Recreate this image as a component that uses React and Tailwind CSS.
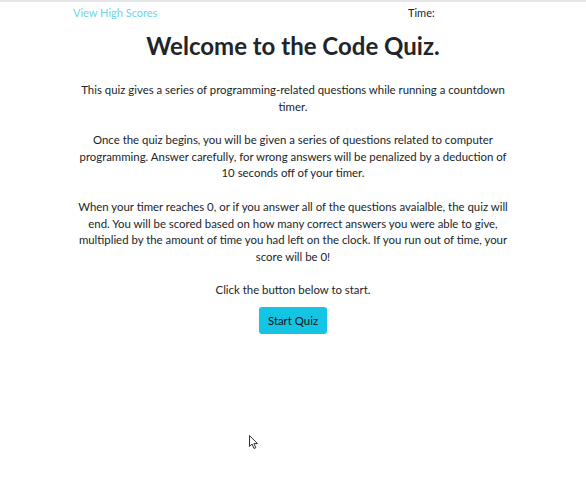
import React from 'react';

export default function App() {
  return (
    <div className="min-h-[480px] w-full border-t-2 border-[#e4e6e8] bg-white font-['Lato',sans-serif] text-[#212529]">
      <div className="mx-auto flex w-[440px] pt-[2px] text-[11px] leading-[17px]">
        <a href="#" className="w-[335px] text-[#6fd3ea]">View High Scores</a>
        <span>Time:</span>
      </div>
      <div className="mx-auto w-[440px] text-center">
        <h1 className="mt-[10px] text-[24px] font-bold leading-[30px]">Welcome to the Code Quiz.</h1>
        <div className="mx-auto mt-[21px] w-[432px] text-[11.4px] leading-[16.6px]">
          <p>This quiz gives a series of programming-related questions while running a countdown timer.</p>
          <p className="mt-[17px]">
            Once the quiz begins, you will be given a series of questions related to computer programming. Answer carefully, for wrong answers will be penalized by a deduction of 10 seconds off of your timer.
          </p>
          <p className="mt-[17px]">
            When your timer reaches 0, or if you answer all of the questions avaialble, the quiz will end. You will be scored based on how many correct answers you were able to give, multiplied by the amount of time you had left on the clock. If you run out of time, your score will be 0!
          </p>
          <p className="mt-[17px]">Click the button below to start.</p>
        </div>
        <button className="mt-[8px] h-[27px] rounded-[3px] bg-[#14c4e4] px-[9px] text-[11.4px] text-[#111]">
          Start Quiz
        </button>
      </div>
      <div className="relative">
        <svg className="absolute left-[249px] top-[101px]" width="10" height="15" viewBox="0 0 10 15">
          <path d="M0.5 0.5 L0.5 11.5 L3 9 L5 13.5 L6.8 12.7 L4.9 8.6 L8.5 8.6 Z" fill="#fff" stroke="#333" strokeWidth="1" />
        </svg>
      </div>
    </div>
  );
}
